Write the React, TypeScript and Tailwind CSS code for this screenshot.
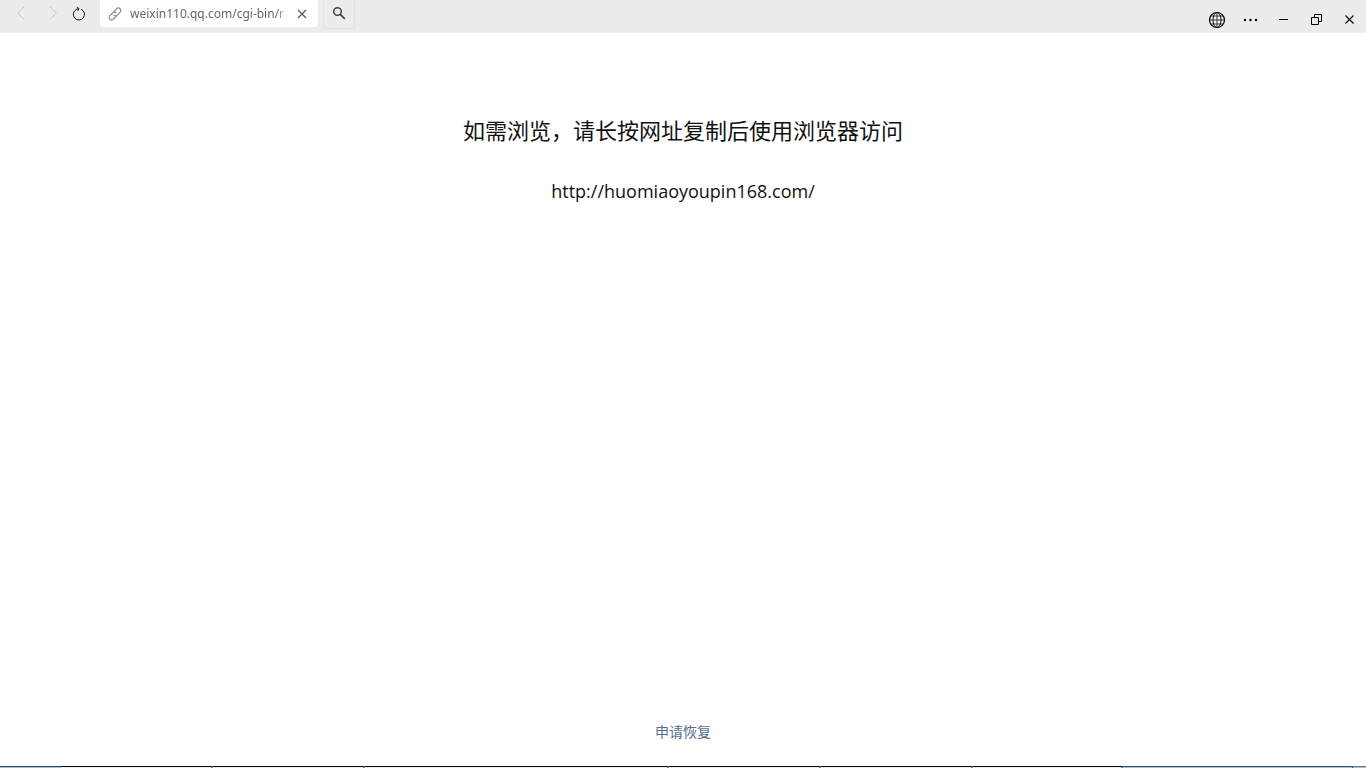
import type { ReactNode } from 'react'

// widths of the taskbar buttons peeking out below the window
const tasks = ['w-[152px]', 'w-[152px]', 'w-[304px]', 'w-[152px]', 'w-[152px]', 'w-[150px]']

function IconButton({ label, disabled, className, children }: { label: string, disabled?: boolean, className: string, children: ReactNode }) {
  return (
    <button type="button" aria-label={label} disabled={disabled} className={`flex items-center justify-center shrink-0 ${className}`}>
      {children}
    </button>
  )
}

function TitleBar() {
  return (
    <header className="w-full h-[33px] shrink-0 flex items-start bg-[#ececec] text-[#111111]">
      <IconButton label="Back" disabled className="w-8 h-[26px] ml-1 text-[#c4c4c4]">
        <svg width="16" height="16" viewBox="0 0 16 16" fill="none" stroke="currentColor"><path d="M12 2 5.500 8l6.500 6" /></svg>
      </IconButton>
      <IconButton label="Forward" disabled className="w-8 h-[26px] text-[#c4c4c4]">
        <svg width="16" height="16" viewBox="0 0 16 16" fill="none" stroke="currentColor"><path d="M6 2 12.500 8 6 14" /></svg>
      </IconButton>
      <IconButton label="Reload" className="w-[22px] h-[27px]">
        <svg width="16" height="16" viewBox="0 0 16 16" fill="none" stroke="currentColor">
          <path d="M10.200 3.300A5.600 5.600 0 1 1 5.200 3.500L7.800 2.600" />
          <path d="M5.800 1.300 8 2.600 6.800 4.900" />
        </svg>
      </IconButton>

      <div className="w-[218px] h-[27px] ml-[10px] flex items-center bg-white rounded-b-[3px]">
        <svg className="ml-[7px] mr-[7px] shrink-0 text-[#8c8c8c]" width="16" height="16" viewBox="0 0 24 24" fill="none" stroke="currentColor" strokeWidth="1.800" strokeLinecap="round">
          <path d="m10.500 8.500 4-4.300a3.600 3.600 0 0 1 5.200 5l-4.200 4.500a3.500 3.500 0 0 1-5.100.1" />
          <path d="m13.500 15.500-4 4.300a3.600 3.600 0 0 1-5.200-5l4.200-4.500a3.500 3.500 0 0 1 5.100-.1" />
        </svg>
        <input
          aria-label="Address"
          readOnly
          value="weixin110.qq.com/cgi-bin/r"
          className="w-[160px] h-[27px] pb-px shrink-0 outline-none text-[12px] text-[#666666] mask-r-from-[146px] mask-r-to-[160px]"
        />
        <IconButton label="Clear address" className="w-6 h-[26px] text-[#555555]">
          <svg width="10" height="10" viewBox="0 0 10 10" fill="none" stroke="currentColor" strokeWidth="1.200"><path d="m1 1 8 8M9 1 1 9" /></svg>
        </IconButton>
      </div>
      <IconButton label="Search" className="w-8 h-[29px] ml-[5px] pb-[2px] border border-t-0 border-[#e2e2e2] rounded-b-[3px] text-[#444444]">
        <svg width="14" height="14" viewBox="0 0 14 14" fill="none" stroke="currentColor" strokeWidth="1.500">
          <circle cx="5.500" cy="5.500" r="3.800" />
          <path d="m8.300 8.300 4.500 4.500" strokeWidth="1.800" />
        </svg>
      </IconButton>

      <div className="ml-auto h-[39px] flex items-center text-black">
        <IconButton label="Open in browser" className="w-[34px] h-8 pr-px">
          <svg width="18" height="18" viewBox="0 0 18 18" fill="none" stroke="currentColor" strokeWidth="0.900">
            <circle cx="9" cy="9" r="7.500" strokeWidth="1.200" />
            <ellipse cx="9" cy="9" rx="4" ry="7.500" />
            <path d="M9 1.500v15M1.500 9h15M3 5h12M3 13h12" strokeWidth="0.700" />
          </svg>
        </IconButton>
        <IconButton label="More" className="w-[33px] h-8">
          <svg width="16" height="4" viewBox="0 0 16 4" fill="currentColor"><circle cx="2" cy="2" r="1.200" /><circle cx="7.500" cy="2" r="1.200" /><circle cx="13" cy="2" r="1.200" /></svg>
        </IconButton>
        <IconButton label="Minimize" className="w-[33px] h-8">
          <svg width="9" height="1" viewBox="0 0 9 1" fill="currentColor"><path d="M0 0h9v1H0z" /></svg>
        </IconButton>
        <IconButton label="Restore" className="w-[33px] h-8">
          <svg width="11" height="11" viewBox="0 0 11 11" fill="none" stroke="currentColor"><path d="M.5 3.500h7v7h-7zM3.500 3.500v-3h7v7h-3" /></svg>
        </IconButton>
        <IconButton label="Close" className="w-[33px] h-8">
          <svg width="9" height="9" viewBox="0 0 9 9" fill="none" stroke="currentColor" strokeWidth="1.100"><path d="m.5.5 8 8M8.500.5l-8 8" /></svg>
        </IconButton>
      </div>
    </header>
  )
}

export default function App() {
  return (
    <div className="min-h-screen flex flex-col bg-white font-['Noto_Sans','Noto_Sans_CJK_SC',sans-serif]">
      <TitleBar />
      <main className="flex-1 flex flex-col items-center px-4 text-center text-[#111111]">
        <h1 className="mt-[81px] text-[22px] leading-8">如需浏览，请长按网址复制后使用浏览器访问</h1>
        <p className="mt-[33px] text-[18px] leading-6 font-['Open_Sans',sans-serif]">http://huomiaoyoupin168.com/</p>
        <a href="#recover" className="mt-auto mb-6 text-sm leading-5 text-[#576b95]">申请恢复</a>
      </main>
      <footer className="h-[2px] flex">
        <div className="w-[61px] border-t border-[#33445a] bg-[#a9c0d8]" />
        {tasks.map((width, i) => (
          <div key={i} className={`${width} border-t border-t-[#05070c] border-r-2 border-r-[#6f8296] bg-[#e9f0f9]`} />
        ))}
        <div className="flex-1 border-t border-[#3d4c5e] bg-[#a9c0d8]" />
        <div className="w-[14px] border-t border-t-[#5d7893] border-l border-l-[#33445a] bg-[#a9c0d8]" />
      </footer>
    </div>
  )
}
